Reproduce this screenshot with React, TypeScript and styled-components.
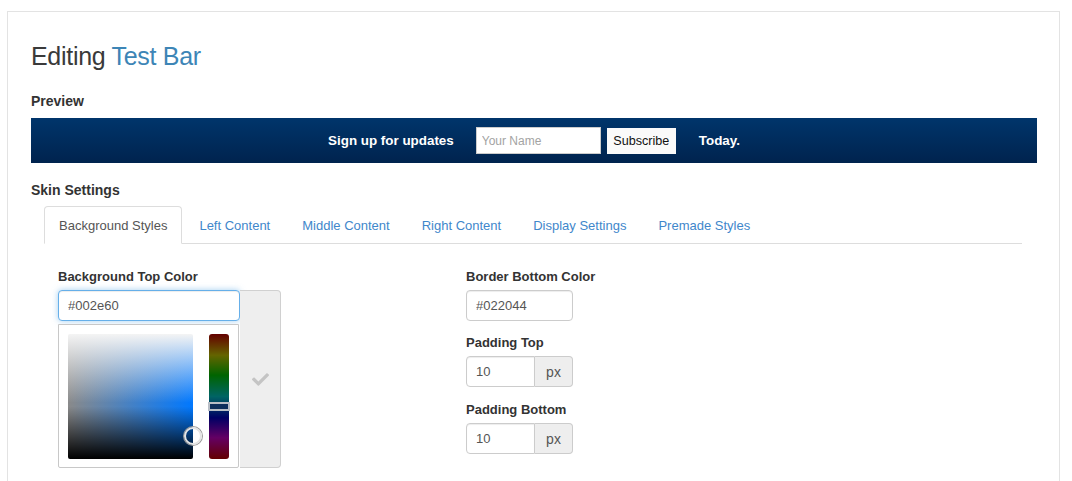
import React from 'react';
import styled, { createGlobalStyle } from 'styled-components';
import { FaCheck } from 'react-icons/fa';

const GlobalStyle = createGlobalStyle`
  body {
    margin: 0;
    background: #fff;
    font-family: "Liberation Sans", Arial, sans-serif;
    color: #333;
  }
  * { box-sizing: border-box; }
`;

const tabs = [
  'Background Styles',
  'Left Content',
  'Middle Content',
  'Right Content',
  'Display Settings',
  'Premade Styles',
];

const App: React.FC = () => {
  return (
    <>
      <GlobalStyle />
      <Panel>
        <Heading>
          Editing <Accent>Test Bar</Accent>
        </Heading>

        <SectionTitle $top={23} $bottom={9}>Preview</SectionTitle>
        <PreviewBar>
          <BarText>Sign up for updates</BarText>
          <BarInput placeholder="Your Name" />
          <BarButton>Subscribe</BarButton>
          <BarText $gap={23}>Today.</BarText>
        </PreviewBar>

        <SectionTitle $top={19} $bottom={8}>Skin Settings</SectionTitle>
        <TabList>
          {tabs.map((t, i) => (
            <Tab key={t} $active={i === 0}>
              {t}
            </Tab>
          ))}
        </TabList>

        <TabPane>
          <Column>
            <Label>Background Top Color</Label>
            <ColorGroup>
              <ColorStack>
                <TextInput $focused $width={182} defaultValue="#002e60" />
                <PickerDrop>
                  <SatBox>
                    <SatMarker />
                  </SatBox>
                  <HueBar>
                    <HueHandle />
                  </HueBar>
                </PickerDrop>
              </ColorStack>
              <CheckAddon>
                <FaCheck />
              </CheckAddon>
            </ColorGroup>
          </Column>

          <Column>
            <Label>Border Bottom Color</Label>
            <TextInput $width={107} defaultValue="#022044" />

            <Label $top={14}>Padding Top</Label>
            <InputGroup>
              <TextInput $width={69} $flatRight defaultValue="10" />
              <UnitAddon>px</UnitAddon>
            </InputGroup>

            <Label $top={15}>Padding Bottom</Label>
            <InputGroup>
              <TextInput $width={69} $flatRight defaultValue="10" />
              <UnitAddon>px</UnitAddon>
            </InputGroup>
          </Column>
        </TabPane>
      </Panel>
    </>
  );
};

const Panel = styled.div`
  margin: 11px 0 0 7px;
  width: 1053px;
  min-height: 480px;
  border: 1px solid #e3e3e3;
  border-bottom: none;
  padding: 30px 22px 0 23px;
  background: #fff;
`;

const Heading = styled.h1`
  margin: 0;
  font-size: 25px;
  font-weight: 400;
  line-height: 28px;
  color: #3a3a3a;
  letter-spacing: -0.3px;
`;

const Accent = styled.span`
  color: #3d85b6;
`;

const SectionTitle = styled.h3<{ $top: number; $bottom: number }>`
  margin: ${(p) => p.$top}px 0 ${(p) => p.$bottom}px;
  font-size: 14px;
  font-weight: 700;
  line-height: 16px;
  color: #333;
`;

const PreviewBar = styled.div`
  height: 45px;
  display: flex;
  align-items: center;
  justify-content: center;
  background: linear-gradient(to bottom, #00356b, #00234e);
`;

const BarText = styled.span<{ $gap?: number }>`
  margin-left: ${(p) => p.$gap ?? 0}px;
  color: #fff;
  font-size: 13.4px;
  font-weight: 700;
`;

const BarInput = styled.input`
  margin-left: 22px;
  width: 125px;
  height: 27px;
  border: 1px solid #ccc;
  padding: 0 5px;
  font-family: "Liberation Sans", Arial, sans-serif;
  font-size: 12px;
  background: #fff;
  &::placeholder {
    color: #a3a3a3;
  }
`;

const BarButton = styled.button`
  margin-left: 6px;
  height: 26px;
  width: 69px;
  padding: 0;
  border: none;
  background: #fafafa;
  color: #111;
  font-family: "Liberation Sans", Arial, sans-serif;
  font-size: 12.6px;
`;

const TabList = styled.ul`
  display: flex;
  list-style: none;
  margin: 8px 15px 0 13px;
  padding: 0;
  border-bottom: 1px solid #ddd;
`;

const Tab = styled.li<{ $active?: boolean }>`
  margin: 0 2px -1px 0;
  padding: 0 14px;
  height: 38px;
  line-height: 37px;
  font-size: 13px;
  color: ${(p) => (p.$active ? '#555' : '#3f87cb')};
  background: ${(p) => (p.$active ? '#fff' : 'transparent')};
  border: 1px solid ${(p) => (p.$active ? '#ddd' : 'transparent')};
  border-bottom-color: ${(p) => (p.$active ? '#fff' : 'transparent')};
  border-radius: 4px 4px 0 0;
`;

const TabPane = styled.div`
  display: grid;
  grid-template-columns: 408px 1fr;
  padding: 25px 27px 0;
`;

const Column = styled.div`
  display: flex;
  flex-direction: column;
  align-items: flex-start;
`;

const Label = styled.label<{ $top?: number }>`
  margin: ${(p) => p.$top ?? 0}px 0 6px;
  font-size: 13px;
  font-weight: 700;
  line-height: 15px;
  color: #333;
`;

const TextInput = styled.input<{ $width: number; $focused?: boolean; $flatRight?: boolean }>`
  width: ${(p) => p.$width}px;
  height: 31px;
  padding: 0 9px;
  font-family: "Liberation Sans", Arial, sans-serif;
  font-size: 13px;
  color: #555;
  background: #fff;
  border: 1px solid ${(p) => (p.$focused ? '#66afe9' : '#ccc')};
  border-radius: ${(p) => (p.$flatRight ? '4px 0 0 4px' : '4px')};
  box-shadow: ${(p) =>
    p.$focused
      ? 'inset 0 1px 1px rgba(0,0,0,.075), 0 0 6px rgba(102,175,233,.6)'
      : 'inset 0 1px 1px rgba(0,0,0,.075)'};
  outline: none;
`;

const ColorGroup = styled.div`
  display: flex;
  align-items: stretch;
`;

const ColorStack = styled.div`
  display: flex;
  flex-direction: column;
`;

const PickerDrop = styled.div`
  margin-top: 3px;
  width: 181px;
  height: 144px;
  padding: 9px;
  display: flex;
  justify-content: space-between;
  border: 1px solid #c8c8c8;
  border-radius: 0 0 2px 2px;
  background: #fff;
`;

const SatBox = styled.div`
  position: relative;
  width: 125px;
  height: 125px;
  border-radius: 2px;
  background:
    linear-gradient(
      to bottom,
      #f4f4f4 0%,
      rgba(255, 255, 255, 0) 55%,
      rgba(0, 0, 0, 0) 58%,
      #000 100%
    ),
    linear-gradient(to right, #8a8a8a, #0078ff);
`;

const SatMarker = styled.div`
  position: absolute;
  left: 116px;
  top: 93px;
  width: 18px;
  height: 18px;
  border-radius: 50%;
  border: 2px solid #e4e4e4;
  box-shadow: 0 0 0 1px #999;
`;

const HueBar = styled.div`
  position: relative;
  margin-left: auto;
  width: 20px;
  height: 125px;
  border-radius: 3px;
  background: linear-gradient(
    to bottom,
    #640000 0%,
    #646400 17%,
    #006400 33%,
    #006464 50%,
    #000064 67%,
    #640064 83%,
    #640000 100%
  );
`;

const HueHandle = styled.div`
  position: absolute;
  left: -1px;
  right: -1px;
  top: 68px;
  height: 9px;
  background: #0d2f5c;
  border: 2px solid #b8bec6;
`;

const CheckAddon = styled.div`
  width: 41px;
  display: flex;
  align-items: center;
  justify-content: center;
  background: #eee;
  border: 1px solid #d0d0d0;
  border-left: none;
  border-radius: 0 4px 4px 0;
  color: #c4c4c4;
  font-size: 17px;
`;

const InputGroup = styled.div`
  display: flex;
`;

const UnitAddon = styled.span`
  width: 38px;
  height: 31px;
  display: flex;
  align-items: center;
  justify-content: center;
  background: #eee;
  border: 1px solid #ccc;
  border-left: none;
  border-radius: 0 4px 4px 0;
  font-size: 14px;
  color: #555;
`;

export default App;
